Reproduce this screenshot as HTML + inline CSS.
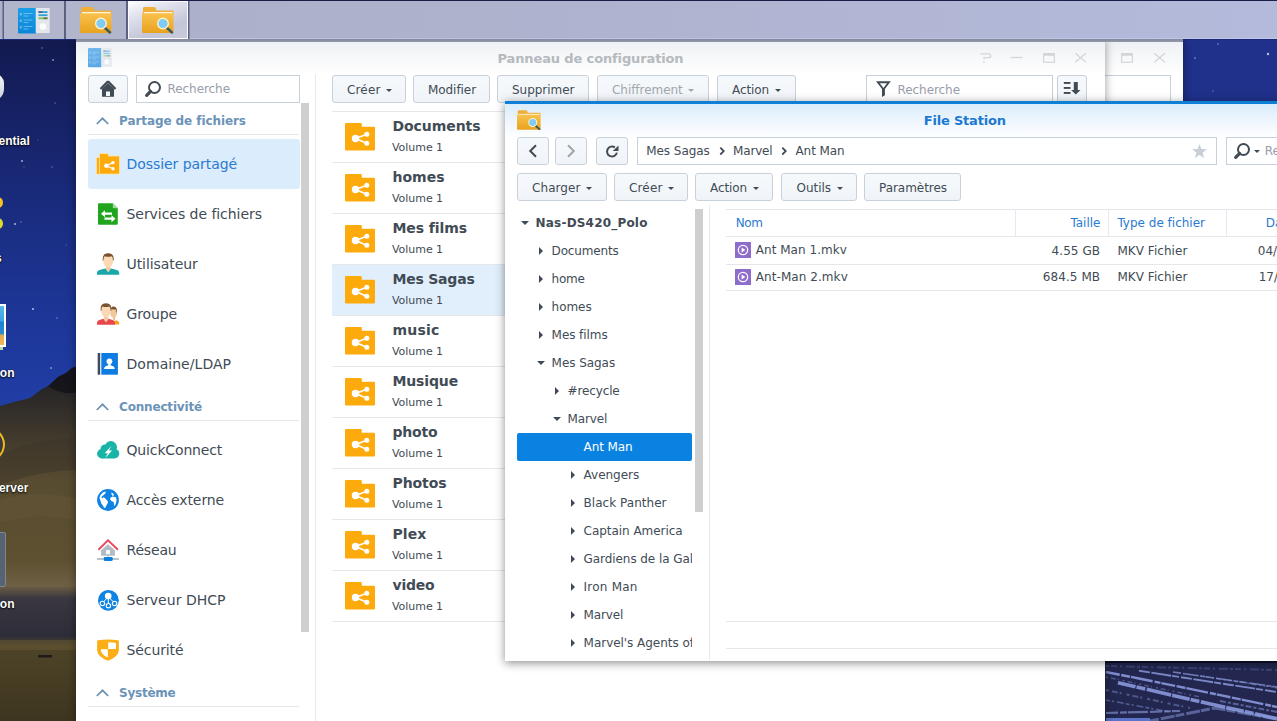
<!DOCTYPE html>
<html lang="fr">
<head>
<meta charset="utf-8">
<title>Synology DiskStation</title>
<style>
*{box-sizing:border-box;margin:0;padding:0}
html,body{width:1277px;height:721px;overflow:hidden}
body{position:relative;font-family:"DejaVu Sans","Liberation Sans",sans-serif;font-size:13px;color:#414b55;background:#1b2a78}
.abs{position:absolute}
svg{display:block}
#wall{position:absolute;left:0;top:0;width:1277px;height:721px;background:#1b2a78}
#tb{position:absolute;left:0;top:0;width:1277px;height:39px;background:linear-gradient(90deg,#acb0ca 0,#adb2cd 40%,#b4badb 100%);box-shadow:inset 0 -1px 0 rgba(200,208,245,.55);border-top:1px solid #1a1d48;z-index:5}
#band{position:absolute;left:76px;top:39px;width:1107px;height:3px;background:linear-gradient(180deg,#84889c,#9498aa);z-index:5}
.tbb{position:absolute;top:0;height:38px;width:60px;background:#b2b6cc;box-shadow:-1.500px 0 0 #5d6180,1.500px 0 0 #5d6180}
.tbb.on{background:linear-gradient(160deg,#fff 0,#e4e5f0 25%,#c3c5d9 70%,#c9cbdc 100%);border:1px solid #fafaff;box-shadow:-1.500px 0 0 #5d6180,1.500px 0 0 #5d6180}
.win{position:absolute;background:#fff}
#cp{width:1029px;height:700px;box-shadow:0 0 9px rgba(0,0,0,.4)}
#fs2{width:283px;height:500px;box-shadow:0 0 9px rgba(0,0,0,.4)}
#fs{width:800px;height:560px;border-top:3px solid #0d7fd6;box-shadow:0 2px 9px rgba(0,0,0,.45)}
.hdr{position:absolute;left:0;top:0;right:0;height:34px;background:linear-gradient(180deg,#edf0f3 0,#fff 100%)}
.btn{position:absolute;height:28px;border:1px solid #c8d1d9;border-radius:3px;background:linear-gradient(180deg,#f6f9fc,#f0f4f8);font-size:13px;color:#414b55;white-space:nowrap}
.btn.dis{color:#a0a6ac}
.car{position:absolute;width:0;height:0;border-left:3px solid transparent;border-right:3px solid transparent;border-top:3px solid #414b55}
.dis .car{border-top-color:#a0a6ac}
.inp{position:absolute;height:28px;border:1px solid #c8d1d9;background:#fff}
.t{position:absolute;white-space:nowrap;line-height:1;display:inline-block;transform-origin:0 0}
.hl{position:absolute;height:1px;background:#e4e8ec}
</style>
</head>
<body>
<div id="wall"></div>
<svg class="abs" style="left:0;top:0" width="1277" height="721" viewBox="0 0 1277 721">
<defs>
<linearGradient id="sky" x1="0" y1="0" x2="0" y2="1"><stop offset="0" stop-color="#131a50"/><stop offset=".25" stop-color="#17246a"/><stop offset=".5" stop-color="#1a2e84"/><stop offset=".75" stop-color="#1d3799"/><stop offset="1" stop-color="#213fa8"/></linearGradient>
<linearGradient id="hill" x1="0" y1="0" x2="0" y2="1"><stop offset="0" stop-color="#1c1b24"/><stop offset=".08" stop-color="#2a2728"/><stop offset=".2" stop-color="#40392c"/><stop offset=".32" stop-color="#574b31"/><stop offset=".55" stop-color="#5e5131"/><stop offset=".62" stop-color="#6e6044"/><stop offset=".655" stop-color="#3a3740"/><stop offset=".76" stop-color="#2d2d39"/><stop offset=".79" stop-color="#4e4428"/><stop offset="1" stop-color="#3d351f"/></linearGradient>
</defs>
<rect x="0" y="40" width="80" height="380" fill="url(#sky)"/>
<path d="M0 406L14 402L30 398L42 389L50 385L58 377L66 373L72 368L80 365V721H0z" fill="url(#hill)"/>
<path d="M0 455Q30 440 80 438V470Q40 470 0 485z" fill="#3c3428" opacity=".5"/><path d="M48 386L58 377L66 373L72 368L80 365V392Q62 396 48 386z" fill="#121218" opacity=".8"/>
<path d="M0 500Q40 488 80 500V520Q40 512 0 522z" fill="#6a5c3c" opacity=".35"/>
<path d="M0 640H80V650H0z" fill="#6a5a36" opacity=".5"/>
<rect x="38" y="655" width="14" height="2.500" rx="1" fill="#1d1b18"/>
<g fill="#aab4e8"><circle cx="42" cy="48" r=".8" opacity=".6"/><circle cx="53" cy="60" r=".9" opacity=".8"/><circle cx="22" cy="161" r=".9"/><circle cx="55" cy="103" r=".7" opacity=".6"/><circle cx="52" cy="167" r=".7" opacity=".6"/><circle cx="38" cy="140" r=".6" opacity=".5"/><circle cx="15" cy="224" r="1"/><circle cx="33" cy="309" r="1.100"/><circle cx="57" cy="318" r=".8" opacity=".7"/><circle cx="51" cy="368" r=".9" opacity=".8"/><circle cx="21" cy="222" r=".7" opacity=".6"/><circle cx="66" cy="245" r=".6" opacity=".6"/><circle cx="24" cy="167" r=".6" opacity=".6"/></g>
<rect x="1183" y="40" width="94" height="62" fill="#20318b"/>
<g fill="#b4bdf0"><circle cx="1218" cy="44" r=".8" opacity=".7"/><circle cx="1268" cy="54" r="1.200"/><circle cx="1195" cy="58" r="1" opacity=".5"/><circle cx="1213" cy="91" r=".8" opacity=".5"/></g>
<rect x="1105" y="660" width="172" height="61" fill="#23274f"/>
<rect x="1105" y="660" width="172" height="3" fill="#10122e"/>
<g stroke="#8fa0e4" fill="none" stroke-linecap="butt">
<path d="M1106 672L1139 678.500L1210 693L1277 707" stroke-width="2.400" opacity=".85" stroke-dasharray="14 1.500 9 1 22 2 6 1"/>
<path d="M1139 670.700L1231 685L1277 692" stroke-width="1.900" opacity=".8" stroke-dasharray="11 1.500 20 1 7 2"/>
<path d="M1173 672L1277 687" stroke-width="1.600" opacity=".7" stroke-dasharray="8 2 16 1.500 5 1"/>
<path d="M1118 682.700L1206 703L1277 718.700" stroke-width="3.600" opacity=".85" stroke-dasharray="18 1 9 1.500 25 1"/>
<path d="M1106 666L1277 670" stroke-width="2" opacity=".35" stroke="#6a78c0" stroke-dasharray="3 2 6 3 2 4 9 2"/>
<path d="M1106 677L1200 697" stroke-width="1.500" opacity=".4" stroke-dasharray="2 3 5 2 1 4"/>
<path d="M1106 690L1190 708" stroke-width="2" opacity=".4" stroke-dasharray="3 3 6 2 2 5"/>
<path d="M1106 700L1170 712" stroke-width="1.600" opacity=".45" stroke-dasharray="4 2 2 3 7 2"/>
<path d="M1200 676L1277 688" stroke-width="1.400" opacity=".4" stroke-dasharray="2 2 5 3"/>
<path d="M1220 701L1277 712" stroke-width="2" opacity=".5" stroke-dasharray="6 2 3 2"/>
<path d="M1106 713L1180 711" stroke-width="2.200" opacity=".6" stroke-dasharray="12 2 7 1 20 2"/>
<path d="M1150 721L1215 708L1277 719" stroke-width="3" opacity=".5" stroke-dasharray="9 2 14 1"/>
<path d="M1106 719.500H1150" stroke-width="3" stroke="#6079d2" opacity=".95"/></g>
</svg>
<div class="abs" style="left:0;top:39px;width:76px;height:682px;overflow:hidden">
<div class="abs" style="left:-14px;top:35px;width:18px;height:27px;border-radius:0 9px 12px 0;background:linear-gradient(180deg,#f4f6f8,#c9cfd8)"></div>
<div class="abs" style="left:-8px;top:158px;width:10.500px;height:11px;border-radius:50%;background:#f4c222"></div>
<div class="abs" style="left:-8px;top:178.5px;width:10.500px;height:11px;border-radius:50%;background:#dcd832"></div>
<div class="abs" style="left:-20px;top:308px;width:23px;height:3px;background:#b8d8a0"></div>
<div class="abs" style="left:-20px;top:265px;width:26px;height:43px;background:linear-gradient(180deg,#58b8ec 0,#3aa4e4 38%,#1a80d2 42%,#2a8ad4 70%,#e8aa4c 76%,#eeb660 100%);border:2px solid #fff;border-left:0"></div>
<div class="abs" style="left:-41px;top:386px;width:46px;height:39px;border-radius:50%;border:2.500px solid #f2b91a;background:#3a3a3c"></div>
<div class="abs" style="left:-20px;top:493px;width:26px;height:55px;border-radius:2px;background:#586270;border:1px solid #7d8794"></div>
<div class="t" style="right:46.2px;top:95.85px;font-family:'Liberation Sans',sans-serif;font-size:12px;font-weight:bold;color:#fff;text-shadow:0 1px 2px rgba(0,0,0,.9),0 0 1px rgba(0,0,0,.8);">Essential</div>
<div class="t" style="right:74.4px;top:212.85px;font-family:'Liberation Sans',sans-serif;font-size:12px;font-weight:bold;color:#fff;text-shadow:0 1px 2px rgba(0,0,0,.9),0 0 1px rgba(0,0,0,.8);">Packages</div>
<div class="t" style="right:61.5px;top:327.85px;font-family:'Liberation Sans',sans-serif;font-size:12px;font-weight:bold;color:#fff;text-shadow:0 1px 2px rgba(0,0,0,.9),0 0 1px rgba(0,0,0,.8);">Photo Station</div>
<div class="t" style="right:47.7px;top:443.35px;font-family:'Liberation Sans',sans-serif;font-size:12px;font-weight:bold;color:#fff;text-shadow:0 1px 2px rgba(0,0,0,.9),0 0 1px rgba(0,0,0,.8);">Media Server</div>
<div class="t" style="right:61.5px;top:559.45px;font-family:'Liberation Sans',sans-serif;font-size:12px;font-weight:bold;color:#fff;text-shadow:0 1px 2px rgba(0,0,0,.9),0 0 1px rgba(0,0,0,.8);">File Station</div>
</div>
<div id="tb"><div class="tbb" style="left:4px"><svg class="abs" style="left:14px;top:7px" width="32" height="26" viewBox="0 0 32 26"><defs><linearGradient id="cpg0" x1="0" y1="0" x2="0" y2="1"><stop offset="0" stop-color="#1a9ee8"/><stop offset="1" stop-color="#0b86d8"/></linearGradient></defs>
<rect x="0" y="0" width="18" height="25.500" rx="0.8" fill="url(#cpg0)"/>
<rect x="17.700" y="0" width="14" height="25" rx="0.8" fill="#e3e6ea"/>
<rect x="20.500" y="3.200" width="9" height="1.800" fill="#2f9fd8"/><rect x="20.500" y="6.300" width="9" height="1.800" fill="#2f9fd8"/><rect x="20.500" y="9.400" width="9" height="1.800" fill="#7cbf4a"/>
<rect x="20.500" y="3.200" width="4" height="1.800" fill="#4a5560" opacity=".7"/><rect x="25.500" y="9.400" width="4" height="1.800" fill="#4a5560" opacity=".7"/>
<circle cx="25" cy="18.500" r="3.300" fill="#fbfcfd"/>
<g fill="#fff" opacity=".35"><rect x="5.500" y="5" width="9" height="1"/><rect x="5.500" y="7.500" width="5" height="1"/><rect x="5.500" y="11.500" width="9" height="1"/><rect x="5.500" y="14" width="5" height="1"/><rect x="5.500" y="18" width="9" height="1"/><rect x="5.500" y="20.500" width="5" height="1"/><rect x="1.800" y="5" width="2" height="2.500"/><rect x="1.800" y="11.500" width="2" height="2.500"/><rect x="1.800" y="18" width="2" height="2.500"/></g></svg></div><div class="tbb" style="left:66px"><svg class="abs" style="left:14px;top:5.500px" width="32" height="27" viewBox="0 0 32 27"><defs><linearGradient id="fga" x1="0" y1="0" x2="0" y2="1"><stop offset="0" stop-color="#f8c24e"/><stop offset="1" stop-color="#e9a21f"/></linearGradient></defs>
<path d="M1 3.500V1.200Q1 0 2.200 0H12.300Q13.300 0 13.600 1L14.300 3.500H30.500Q31.500 3.500 31.500 4.500V8H1z" fill="#eeb03a"/>
<rect x="2" y="5" width="28.500" height="4" fill="#fdf3d6"/>
<path d="M0 7.200Q0 6.200 1 6.200H30.500Q31.500 6.200 31.500 7.200V25Q31.500 26 30.500 26H1Q0 26 0 25z" fill="url(#fga)"/>
<path d="M24.500 20.500L30 25.500" stroke="#3a5a5c" stroke-width="2.400" stroke-linecap="round"/>
<circle cx="21" cy="16.500" r="5.300" fill="#7dcbf6" stroke="#fff3c4" stroke-width="1.400"/></svg></div><div class="tbb on" style="left:128px"><svg class="abs" style="left:13px;top:4.500px" width="32" height="27" viewBox="0 0 32 27"><defs><linearGradient id="fgb" x1="0" y1="0" x2="0" y2="1"><stop offset="0" stop-color="#f8c24e"/><stop offset="1" stop-color="#e9a21f"/></linearGradient></defs>
<path d="M1 3.500V1.200Q1 0 2.200 0H12.300Q13.300 0 13.600 1L14.300 3.500H30.500Q31.500 3.500 31.500 4.500V8H1z" fill="#eeb03a"/>
<rect x="2" y="5" width="28.500" height="4" fill="#fdf3d6"/>
<path d="M0 7.200Q0 6.200 1 6.200H30.500Q31.500 6.200 31.500 7.200V25Q31.500 26 30.500 26H1Q0 26 0 25z" fill="url(#fgb)"/>
<path d="M24.500 20.500L30 25.500" stroke="#3a5a5c" stroke-width="2.400" stroke-linecap="round"/>
<circle cx="21" cy="16.500" r="5.300" fill="#7dcbf6" stroke="#fff3c4" stroke-width="1.400"/></svg></div></div>
<div id="band"></div>
<div class="win" id="fs2" style="left:900px;top:40px">
<div class="hdr"></div>
<div class="abs" style="left:219.70000000000005px;top:8.200000000000003px"><svg width="50" height="16" viewBox="0 0 50 16" ><g fill="none" stroke="#d2d6da" stroke-width="1.200">
<rect x="1.600" y="5.600" width="10.800" height="8.600"/><path d="M1.600 6.800h10.800" stroke-width="2"/>
<path d="M34.300 5.300l10.600 9M44.900 5.300l-10.600 9"/></g></svg></div>
<div class="inp" style="left:100px;top:35px;width:171px;height:28px;"></div>
</div>
<div class="win" id="cp" style="left:76px;top:40px">
<div class="hdr"></div>
<div class="abs" style="left:12px;top:7.5px"><svg width="24" height="20" viewBox="0 0 32 26.500" style="display:block"><defs><linearGradient id="cpgs" x1="0" y1="0" x2="0" y2="1"><stop offset="0" stop-color="#6eb6ec"/><stop offset="1" stop-color="#59a9e6"/></linearGradient></defs>
<rect x="0" y="0" width="18" height="25.500" rx="0.8" fill="url(#cpgs)"/>
<rect x="17.700" y="0" width="14" height="25" rx="0.8" fill="#e6eaee"/>
<rect x="20.500" y="3.200" width="9" height="1.800" fill="#8ecbee"/><rect x="20.500" y="6.300" width="9" height="1.800" fill="#8ecbee"/><rect x="20.500" y="9.400" width="9" height="1.800" fill="#a9d69a"/>
<rect x="20.500" y="3.200" width="4" height="1.800" fill="#9aa5ae" opacity=".7"/><rect x="25.500" y="9.400" width="4" height="1.800" fill="#9aa5ae" opacity=".7"/>
<circle cx="25" cy="18.500" r="3.300" fill="#fbfcfd"/>
<g fill="#fff" opacity=".35"><rect x="5.500" y="5" width="9" height="1"/><rect x="5.500" y="7.500" width="5" height="1"/><rect x="5.500" y="11.500" width="9" height="1"/><rect x="5.500" y="14" width="5" height="1"/><rect x="5.500" y="18" width="9" height="1"/><rect x="5.500" y="20.500" width="5" height="1"/><rect x="1.800" y="5" width="2" height="2.500"/><rect x="1.800" y="11.500" width="2" height="2.500"/><rect x="1.800" y="18" width="2" height="2.500"/></g></svg></div>
<div class="t" style="top:12.00px;font-size:13px;color:#b5babf;font-weight:bold;letter-spacing:-0.130px;left:421.5px;">Panneau de configuration</div>
<div class="abs" style="left:900px;top:8.200000000000003px"><svg width="112" height="16" viewBox="0 0 112 16" ><g fill="none" stroke="#d2d6da" stroke-width="1.200">
<path d="M4.500 5.800h8.600q1.700 0 1.700 1.900q0 2-1.900 2h-4.900v1.700"/><path d="M8 13.200v1.500"/>
<path d="M34.800 9.500h12"/>
<rect x="67.600" y="5.600" width="10.800" height="8.600"/><path d="M67.600 6.800h10.800" stroke-width="2"/>
<path d="M99.300 5.300l10.600 9M109.900 5.300l-10.600 9"/></g></svg></div>
<div class="btn" style="left:12px;top:35px;width:40px;height:28px;"></div>
<div class="abs" style="left:22px;top:40px"><svg width="20" height="18" viewBox="0 0 20 18" ><path d="M10 1.300L2.500 8.900M10 1.300l7.500 7.600" stroke="#414b55" stroke-width="2.200" stroke-linecap="butt" fill="none"/><path d="M4 8.800L10 2.900l6 5.900V16.800H4z" fill="#414b55"/><rect x="8" y="11.500" width="4" height="4.500" fill="#f4f7fa"/></svg></div>
<div class="inp" style="left:60px;top:35px;width:164px;height:28px;"></div>
<div class="abs" style="left:68px;top:40px"><svg width="18" height="18" viewBox="0 0 18 18" ><circle cx="10.500" cy="7.500" r="5.500" fill="none" stroke="#414b55" stroke-width="2"/><path d="M6.600 11.400L2.700 15.300" stroke="#414b55" stroke-width="3.200" stroke-linecap="round"/></svg></div>
<div class="t" style="top:43.05px;font-size:12px;color:#979dab;letter-spacing:-0.059px;left:91.5px;">Recherche</div>
<div class="abs" style="left:225px;top:63px;width:8px;height:529px;background:#cfcfcf"></div>
<div class="abs" style="left:239px;top:34px;width:1px;height:660px;background:#e6e9ed"></div>
<div class="abs" style="left:19.5px;top:76.7px"><svg width="13" height="8" viewBox="0 0 13 8" ><path d="M0.800 7L6.500 1.300 12.200 7" fill="none" stroke="#6b90b0" stroke-width="1.700"/></svg></div><div class="t" style="top:74.85px;font-size:12px;color:#6b93b8;font-weight:bold;letter-spacing:-0.079px;left:43px;">Partage de fichiers</div><div class="hl" style="left:12px;top:94px;width:211px"></div>
<div class="abs" style="left:19.5px;top:362.7px"><svg width="13" height="8" viewBox="0 0 13 8" ><path d="M0.800 7L6.500 1.300 12.200 7" fill="none" stroke="#6b90b0" stroke-width="1.700"/></svg></div><div class="t" style="top:360.85px;font-size:12px;color:#6b93b8;font-weight:bold;letter-spacing:-0.172px;left:43px;">Connectivité</div><div class="hl" style="left:12px;top:380px;width:211px"></div>
<div class="abs" style="left:19.5px;top:648.7px"><svg width="13" height="8" viewBox="0 0 13 8" ><path d="M0.800 7L6.500 1.300 12.200 7" fill="none" stroke="#6b90b0" stroke-width="1.700"/></svg></div><div class="t" style="top:646.85px;font-size:12px;color:#6b93b8;font-weight:bold;letter-spacing:-0.232px;left:43px;">Système</div><div class="hl" style="left:12px;top:666px;width:211px"></div>
<div class="abs" style="left:12px;top:99px;width:212px;height:49.5px;background:#dbecfc;border-radius:3px"></div>
<div class="abs" style="left:20px;top:112px;width:24px;height:24px"><svg width="24" height="24" viewBox="0 0 24 24" ><rect x="0.400" y="5.400" width="4" height="16.800" rx="0.800" fill="#fdaa0d" stroke="#fde9b0" stroke-width="0.800"/>
<path d="M3.400 2.500Q3.400 1.600 4.300 1.600H11.600Q12.500 1.600 12.500 2.500V4H22.700Q23.600 4 23.600 4.900V21.200Q23.600 22.100 22.700 22.100H4.300Q3.400 22.100 3.400 21.200z" fill="#fdaa0d" stroke="#fde9b0" stroke-width="0.800"/>
<g stroke="#fff" stroke-width="1.200"><path d="M10.400 13.700L17 10.600M10.400 13.700L17 16.800"/></g>
<circle cx="10.400" cy="13.700" r="2.300" fill="#fff"/><circle cx="17" cy="10.600" r="1.700" fill="#fff"/><circle cx="17" cy="16.800" r="1.700" fill="#fff"/></svg></div>
<div class="t" style="top:117.16px;font-size:14px;color:#2a7ad2;letter-spacing:-0.056px;left:50.5px;">Dossier partagé</div>
<div class="abs" style="left:20px;top:162px;width:24px;height:24px"><svg width="24" height="24" viewBox="0 0 24 24" ><path d="M2 2.200Q2 1.200 3 1.200H16.800L21.800 6.200V21.700Q21.800 22.700 20.800 22.700H3Q2 22.700 2 21.700z" fill="#22a51e"/>
<path d="M16.800 1.200L21.800 6.200H17.600Q16.800 6.200 16.800 5.400z" fill="#9fdc9b"/>
<g fill="#fff"><path d="M5 11.700L9 8.200V10.600H16V12.800H9V15.200z"/><path d="M19.500 16.700L15.500 13.200V15.600H8.500V17.800H15.500V20.200z"/></g></svg></div>
<div class="t" style="top:167.16px;font-size:14px;color:#414b55;letter-spacing:-0.045px;left:50.5px;">Services de fichiers</div>
<div class="abs" style="left:20px;top:212px;width:24px;height:24px"><svg width="24" height="24" viewBox="0 0 24 24" ><path d="M1 22.800V20.800Q1 18.600 3.500 17.900L9.200 16.400H15.200L20.700 17.900Q23.200 18.600 23.200 20.800V22.800z" fill="#19a7a8"/>
<path d="M9.300 16.300L12.200 20.200L15.100 16.300z" fill="#fbe3c6"/>
<path d="M10 13.500h4.400v3.600L12.200 19.600 10 17.100z" fill="#f3c9a0"/>
<ellipse cx="12.200" cy="8.800" rx="4.900" ry="6.500" fill="#fbd9b5"/>
<path d="M6.700 8.500Q6 1.200 12.200 1.200Q18.400 1.200 17.700 8.500L16.900 8.500Q17 5 15.500 4.300Q12 5.400 8.800 4.300Q7.400 5 7.500 8.500z" fill="#7a522f"/></svg></div>
<div class="t" style="top:217.16px;font-size:14px;color:#414b55;letter-spacing:-0.065px;left:50.5px;">Utilisateur</div>
<div class="abs" style="left:20px;top:262px;width:24px;height:24px"><svg width="24" height="24" viewBox="0 0 24 24" ><path d="M18 22.600V19.300L20.300 18.300Q23.200 19 23.200 21V22.600z" fill="#f5a623"/>
<path d="M16 12h3.200v5.500L17.500 19z" fill="#eac08f"/>
<ellipse cx="17.600" cy="10.800" rx="3.400" ry="5" fill="#f0c89c"/>
<path d="M14.300 9Q14.300 4.400 17.800 4.400Q21.300 4.400 21 10.500L20.300 10.500Q20.400 7.800 19.400 7.200Q17 7.800 15 7z" fill="#7a522f"/>
<path d="M1 22.700V20.900Q1 18.800 3.300 18.100L7.500 16.800H12.500L16.600 18.100Q19 18.800 19 20.900V22.700z" fill="#e8474c"/>
<path d="M7.300 16.700L10 20.300L12.700 16.700z" fill="#fbe3c6"/>
<path d="M7.900 13.800h4.200v3.500L10 19.700 7.900 17.300z" fill="#f3c9a0"/>
<ellipse cx="10" cy="9" rx="4.800" ry="6.400" fill="#fbd9b5"/>
<path d="M4.600 8.700Q3.900 1.300 10 1.300Q16.100 1.300 15.400 8.700L14.600 8.700Q14.700 5.200 13.200 4.500Q9.800 5.600 6.600 4.500Q5.300 5.200 5.400 8.700z" fill="#7a522f"/></svg></div>
<div class="t" style="top:267.16px;font-size:14px;color:#414b55;letter-spacing:-0.108px;left:50.5px;">Groupe</div>
<div class="abs" style="left:20px;top:312px;width:24px;height:24px"><svg width="24" height="24" viewBox="0 0 24 24" ><rect x="1.700" y="1" width="2.500" height="21.700" fill="#3e4a5e"/>
<rect x="5.300" y="1" width="16.600" height="21.700" fill="#0e7ce0"/>
<circle cx="13.400" cy="9.300" r="2.900" fill="#fff"/>
<path d="M12.200 11h2.400v2.200Q17.800 14 18.300 15.200Q18.700 16 18.700 17.100H8.100Q8.100 16 8.500 15.200Q9 14 12.200 13.200z" fill="#fff"/></svg></div>
<div class="t" style="top:317.16px;font-size:14px;color:#414b55;letter-spacing:0.049px;left:50.5px;">Domaine/LDAP</div>
<div class="abs" style="left:20px;top:398px;width:24px;height:24px"><svg width="24" height="24" viewBox="0 0 24 24" ><g fill="#19b3a7"><circle cx="5.800" cy="15.800" r="4.700"/><circle cx="8.800" cy="10.800" r="4.200"/><circle cx="14.800" cy="9.300" r="6.200"/><circle cx="18.600" cy="15.600" r="4.700"/><rect x="5.800" y="12" width="13" height="8.500"/></g>
<path d="M15.200 7.900L8.700 15.300H11.800L9.300 19.900L16.100 12.600H12.900z" fill="#fff"/></svg></div>
<div class="t" style="top:403.16px;font-size:14px;color:#414b55;letter-spacing:-0.149px;left:50.5px;">QuickConnect</div>
<div class="abs" style="left:20px;top:448px;width:24px;height:24px"><svg width="24" height="24" viewBox="0 0 24 24" ><circle cx="12" cy="12" r="10.900" fill="#0f83e3"/>
<path d="M7.200 4.300L9.800 3.500L9.400 5.600L7.300 7.200L5.300 9L6.300 10.200L7.800 9.200L9.600 10.800L11.900 13.600L11.900 14.800L10.500 17.200L9.300 19.800L8.200 20L6.800 17.500L5.200 15.200L4.400 12.500L3.500 10L4.400 7z" fill="#fff"/>
<path d="M15.200 4.600L17.200 5.500L18 7.600L16.400 7.800L15.600 6.200z" fill="#fff"/>
<path d="M14.300 9.800L16.800 8.600L20 9.200L20.600 11.500L20.200 14.200L19 17.500L18 17.800L17.800 14L15.600 13.300L14.200 11.500z" fill="#fff"/></svg></div>
<div class="t" style="top:453.16px;font-size:14px;color:#414b55;letter-spacing:-0.096px;left:50.5px;">Accès externe</div>
<div class="abs" style="left:20px;top:498px;width:24px;height:24px"><svg width="24" height="24" viewBox="0 0 24 24" ><path d="M12 6.200L18.900 12.300V17.800H5.100V12.300z" fill="#b3bbc6"/>
<rect x="10" y="12.100" width="4" height="4" fill="#fff"/>
<path d="M2.900 11.200L12 2.300L21.400 11.200" fill="none" stroke="#e9495a" stroke-width="1.900" stroke-linecap="round" stroke-linejoin="miter"/>
<rect x="1.100" y="20.100" width="21.800" height="1.800" fill="#b3bbc6"/>
<rect x="11.500" y="17.800" width="1" height="1.400" fill="#7fbdf0"/>
<rect x="7.800" y="19" width="8.900" height="3.900" rx="1.200" fill="#0f7fdc"/></svg></div>
<div class="t" style="top:503.16px;font-size:14px;color:#414b55;letter-spacing:-0.180px;left:50.5px;">Réseau</div>
<div class="abs" style="left:20px;top:548px;width:24px;height:24px"><svg width="24" height="24" viewBox="0 0 24 24" ><circle cx="12.400" cy="12.300" r="10.400" fill="#0f83e3"/>
<g stroke="#fff" stroke-width="1" fill="none"><path d="M12.300 8.200V15.400M11 10L7.600 13.800M13.600 10L17.200 13.800"/>
<circle cx="6.400" cy="15.400" r="2.200" stroke-width="1.100"/><circle cx="12.400" cy="17.700" r="2.200" stroke-width="1.100"/><circle cx="18.600" cy="15.400" r="2.200" stroke-width="1.100"/></g>
<circle cx="12.200" cy="8.100" r="3.300" fill="#fff"/></svg></div>
<div class="t" style="top:553.16px;font-size:14px;color:#414b55;letter-spacing:0.020px;left:50.5px;">Serveur DHCP</div>
<div class="abs" style="left:20px;top:598px;width:24px;height:24px"><svg width="24" height="24" viewBox="0 0 24 24" ><path d="M1.100 3.200Q1.100 2.400 1.900 2.300Q12 0.500 22 2.300Q22.900 2.400 22.900 3.200V12Q22.900 18.500 12 22.800Q1.100 18.500 1.100 12z" fill="#fcae17"/>
<path d="M12.200 4.200Q16.500 4.300 20 5V10.900H12.200z" fill="#fff"/>
<path d="M4.700 11.300H11.800V19.600Q5 16.800 4.700 11.300z" fill="#fff"/></svg></div>
<div class="t" style="top:603.16px;font-size:14px;color:#414b55;letter-spacing:-0.104px;left:50.5px;">Sécurité</div>
<div class="btn" style="left:256px;top:35px;width:74px"></div><div class="t" style="top:44.25px;font-size:12px;color:#414b55;letter-spacing:0.150px;left:271px;">Créer</div><div class="car" style="left:310.0px;top:49.2px;border-top-color:#414b55"></div>
<div class="btn" style="left:337px;top:35px;width:77px"></div><div class="t" style="top:44.25px;font-size:12px;color:#414b55;letter-spacing:-0.066px;left:352px;">Modifier</div>
<div class="btn" style="left:421px;top:35px;width:92px"></div><div class="t" style="top:44.25px;font-size:12px;color:#414b55;letter-spacing:-0.026px;left:436px;">Supprimer</div>
<div class="btn dis" style="left:521px;top:35px;width:112px"></div><div class="t" style="top:44.25px;font-size:12px;color:#a0a6ac;letter-spacing:-0.048px;left:536px;">Chiffrement</div><div class="car" style="left:612.0px;top:49.2px;border-top-color:#a0a6ac"></div>
<div class="btn" style="left:641px;top:35px;width:78.5px"></div><div class="t" style="top:44.25px;font-size:12px;color:#414b55;letter-spacing:-0.099px;left:656px;">Action</div><div class="car" style="left:698.5px;top:49.2px;border-top-color:#414b55"></div>
<div class="inp" style="left:790px;top:35px;width:187px;height:28px;"></div>
<div class="abs" style="left:799px;top:41px"><svg width="17" height="17" viewBox="0 0 17 17" ><path fill-rule="evenodd" d="M1 0.200H15.800L9.900 8V14.200L7 16V8zM4.800 2.200H12L8.400 6.900z" fill="#414b55"/></svg></div>
<div class="t" style="top:44.05px;font-size:12px;color:#979dab;letter-spacing:-0.059px;left:821.5px;">Recherche</div>
<div class="btn" style="left:981px;top:35px;width:29.5px;height:28px;"></div>
<div class="abs" style="left:987px;top:41px"><svg width="18" height="14" viewBox="0 0 18 14" ><g fill="#414b55"><rect x="0.800" y="1" width="6.700" height="1.900"/><rect x="0.800" y="6" width="6.700" height="1.900"/><rect x="0.800" y="11" width="6.700" height="1.900"/><path d="M10.800 1h4v8h2.700l-4.700 4.500L8.100 9h2.700z"/></g></svg></div>
<div class="hl" style="left:256px;top:71px;width:780px"></div>
<div class="abs" style="left:269px;top:83.2px"><svg width="30" height="28" viewBox="0 0 30 28" ><path d="M0 1Q0 0 1 0H15.800Q16.800 0 16.800 1V3.800H29Q30 3.800 30 4.800V26.500Q30 27.500 29 27.500H1Q0 27.500 0 26.500z" fill="#fdaa0d"/>
<g stroke="#fff" stroke-width="1.600" fill="none"><path d="M10.500 15.500L21.800 11.200M10.500 15.500L21.800 20.200"/></g>
<circle cx="10.500" cy="15.500" r="3.700" fill="#fff"/><circle cx="21.800" cy="11.200" r="2.500" fill="#fff"/><circle cx="21.800" cy="20.200" r="2.500" fill="#fff"/></svg></div>
<div class="t" style="top:78.96px;font-size:14px;color:#414b55;font-weight:bold;letter-spacing:-0.066px;left:316.5px;">Documents</div>
<div class="t" style="top:102.29px;font-size:11px;color:#414b55;letter-spacing:-0.053px;left:316px;">Volume 1</div>
<div class="hl" style="left:256px;top:122px;width:780px"></div>
<div class="abs" style="left:269px;top:134.2px"><svg width="30" height="28" viewBox="0 0 30 28" ><path d="M0 1Q0 0 1 0H15.800Q16.800 0 16.800 1V3.800H29Q30 3.800 30 4.800V26.500Q30 27.500 29 27.500H1Q0 27.500 0 26.500z" fill="#fdaa0d"/>
<g stroke="#fff" stroke-width="1.600" fill="none"><path d="M10.500 15.500L21.800 11.200M10.500 15.500L21.800 20.200"/></g>
<circle cx="10.500" cy="15.500" r="3.700" fill="#fff"/><circle cx="21.800" cy="11.200" r="2.500" fill="#fff"/><circle cx="21.800" cy="20.200" r="2.500" fill="#fff"/></svg></div>
<div class="t" style="top:129.96px;font-size:14px;color:#414b55;font-weight:bold;letter-spacing:-0.003px;left:316.5px;">homes</div>
<div class="t" style="top:153.29px;font-size:11px;color:#414b55;letter-spacing:-0.053px;left:316px;">Volume 1</div>
<div class="hl" style="left:256px;top:173px;width:780px"></div>
<div class="abs" style="left:269px;top:185.2px"><svg width="30" height="28" viewBox="0 0 30 28" ><path d="M0 1Q0 0 1 0H15.800Q16.800 0 16.800 1V3.800H29Q30 3.800 30 4.800V26.500Q30 27.500 29 27.500H1Q0 27.500 0 26.500z" fill="#fdaa0d"/>
<g stroke="#fff" stroke-width="1.600" fill="none"><path d="M10.500 15.500L21.800 11.200M10.500 15.500L21.800 20.200"/></g>
<circle cx="10.500" cy="15.500" r="3.700" fill="#fff"/><circle cx="21.800" cy="11.200" r="2.500" fill="#fff"/><circle cx="21.800" cy="20.200" r="2.500" fill="#fff"/></svg></div>
<div class="t" style="top:180.96px;font-size:14px;color:#414b55;font-weight:bold;letter-spacing:-0.082px;left:316.5px;">Mes films</div>
<div class="t" style="top:204.29px;font-size:11px;color:#414b55;letter-spacing:-0.053px;left:316px;">Volume 1</div>
<div class="abs" style="left:256px;top:225px;width:780px;height:50px;background:#e1effc"></div>
<div class="hl" style="left:256px;top:224px;width:780px"></div>
<div class="abs" style="left:269px;top:236.2px"><svg width="30" height="28" viewBox="0 0 30 28" ><path d="M0 1Q0 0 1 0H15.800Q16.800 0 16.800 1V3.800H29Q30 3.800 30 4.800V26.500Q30 27.500 29 27.500H1Q0 27.500 0 26.500z" fill="#fdaa0d"/>
<g stroke="#fff" stroke-width="1.600" fill="none"><path d="M10.500 15.500L21.800 11.200M10.500 15.500L21.800 20.200"/></g>
<circle cx="10.500" cy="15.500" r="3.700" fill="#fff"/><circle cx="21.800" cy="11.200" r="2.500" fill="#fff"/><circle cx="21.800" cy="20.200" r="2.500" fill="#fff"/></svg></div>
<div class="t" style="top:231.96px;font-size:14px;color:#414b55;font-weight:bold;letter-spacing:-0.219px;left:316.5px;">Mes Sagas</div>
<div class="t" style="top:255.29px;font-size:11px;color:#414b55;letter-spacing:-0.053px;left:316px;">Volume 1</div>
<div class="hl" style="left:256px;top:275px;width:780px"></div>
<div class="abs" style="left:269px;top:287.2px"><svg width="30" height="28" viewBox="0 0 30 28" ><path d="M0 1Q0 0 1 0H15.800Q16.800 0 16.800 1V3.800H29Q30 3.800 30 4.800V26.500Q30 27.500 29 27.500H1Q0 27.500 0 26.500z" fill="#fdaa0d"/>
<g stroke="#fff" stroke-width="1.600" fill="none"><path d="M10.500 15.500L21.800 11.200M10.500 15.500L21.800 20.200"/></g>
<circle cx="10.500" cy="15.500" r="3.700" fill="#fff"/><circle cx="21.800" cy="11.200" r="2.500" fill="#fff"/><circle cx="21.800" cy="20.200" r="2.500" fill="#fff"/></svg></div>
<div class="t" style="top:282.96px;font-size:14px;color:#414b55;font-weight:bold;letter-spacing:0.200px;left:316.5px;">music</div>
<div class="t" style="top:306.29px;font-size:11px;color:#414b55;letter-spacing:-0.053px;left:316px;">Volume 1</div>
<div class="hl" style="left:256px;top:326px;width:780px"></div>
<div class="abs" style="left:269px;top:338.2px"><svg width="30" height="28" viewBox="0 0 30 28" ><path d="M0 1Q0 0 1 0H15.800Q16.800 0 16.800 1V3.800H29Q30 3.800 30 4.800V26.500Q30 27.500 29 27.500H1Q0 27.500 0 26.500z" fill="#fdaa0d"/>
<g stroke="#fff" stroke-width="1.600" fill="none"><path d="M10.500 15.500L21.800 11.200M10.500 15.500L21.800 20.200"/></g>
<circle cx="10.500" cy="15.500" r="3.700" fill="#fff"/><circle cx="21.800" cy="11.200" r="2.500" fill="#fff"/><circle cx="21.800" cy="20.200" r="2.500" fill="#fff"/></svg></div>
<div class="t" style="top:333.96px;font-size:14px;color:#414b55;font-weight:bold;letter-spacing:-0.145px;left:316.5px;">Musique</div>
<div class="t" style="top:357.29px;font-size:11px;color:#414b55;letter-spacing:-0.053px;left:316px;">Volume 1</div>
<div class="hl" style="left:256px;top:377px;width:780px"></div>
<div class="abs" style="left:269px;top:389.2px"><svg width="30" height="28" viewBox="0 0 30 28" ><path d="M0 1Q0 0 1 0H15.800Q16.800 0 16.800 1V3.800H29Q30 3.800 30 4.800V26.500Q30 27.500 29 27.500H1Q0 27.500 0 26.500z" fill="#fdaa0d"/>
<g stroke="#fff" stroke-width="1.600" fill="none"><path d="M10.500 15.500L21.800 11.200M10.500 15.500L21.800 20.200"/></g>
<circle cx="10.500" cy="15.500" r="3.700" fill="#fff"/><circle cx="21.800" cy="11.200" r="2.500" fill="#fff"/><circle cx="21.800" cy="20.200" r="2.500" fill="#fff"/></svg></div>
<div class="t" style="top:384.96px;font-size:14px;color:#414b55;font-weight:bold;letter-spacing:-0.184px;left:316.5px;">photo</div>
<div class="t" style="top:408.29px;font-size:11px;color:#414b55;letter-spacing:-0.053px;left:316px;">Volume 1</div>
<div class="hl" style="left:256px;top:428px;width:780px"></div>
<div class="abs" style="left:269px;top:440.2px"><svg width="30" height="28" viewBox="0 0 30 28" ><path d="M0 1Q0 0 1 0H15.800Q16.800 0 16.800 1V3.800H29Q30 3.800 30 4.800V26.500Q30 27.500 29 27.500H1Q0 27.500 0 26.500z" fill="#fdaa0d"/>
<g stroke="#fff" stroke-width="1.600" fill="none"><path d="M10.500 15.500L21.800 11.200M10.500 15.500L21.800 20.200"/></g>
<circle cx="10.500" cy="15.500" r="3.700" fill="#fff"/><circle cx="21.800" cy="11.200" r="2.500" fill="#fff"/><circle cx="21.800" cy="20.200" r="2.500" fill="#fff"/></svg></div>
<div class="t" style="top:435.96px;font-size:14px;color:#414b55;font-weight:bold;letter-spacing:-0.083px;left:316.5px;">Photos</div>
<div class="t" style="top:459.29px;font-size:11px;color:#414b55;letter-spacing:-0.053px;left:316px;">Volume 1</div>
<div class="hl" style="left:256px;top:479px;width:780px"></div>
<div class="abs" style="left:269px;top:491.20000000000005px"><svg width="30" height="28" viewBox="0 0 30 28" ><path d="M0 1Q0 0 1 0H15.800Q16.800 0 16.800 1V3.800H29Q30 3.800 30 4.800V26.500Q30 27.500 29 27.500H1Q0 27.500 0 26.500z" fill="#fdaa0d"/>
<g stroke="#fff" stroke-width="1.600" fill="none"><path d="M10.500 15.500L21.800 11.200M10.500 15.500L21.800 20.200"/></g>
<circle cx="10.500" cy="15.500" r="3.700" fill="#fff"/><circle cx="21.800" cy="11.200" r="2.500" fill="#fff"/><circle cx="21.800" cy="20.200" r="2.500" fill="#fff"/></svg></div>
<div class="t" style="top:486.96px;font-size:14px;color:#414b55;font-weight:bold;letter-spacing:0.102px;left:316.5px;">Plex</div>
<div class="t" style="top:510.29px;font-size:11px;color:#414b55;letter-spacing:-0.053px;left:316px;">Volume 1</div>
<div class="hl" style="left:256px;top:530px;width:780px"></div>
<div class="abs" style="left:269px;top:542.2px"><svg width="30" height="28" viewBox="0 0 30 28" ><path d="M0 1Q0 0 1 0H15.800Q16.800 0 16.800 1V3.800H29Q30 3.800 30 4.800V26.500Q30 27.500 29 27.500H1Q0 27.500 0 26.500z" fill="#fdaa0d"/>
<g stroke="#fff" stroke-width="1.600" fill="none"><path d="M10.500 15.500L21.800 11.200M10.500 15.500L21.800 20.200"/></g>
<circle cx="10.500" cy="15.500" r="3.700" fill="#fff"/><circle cx="21.800" cy="11.200" r="2.500" fill="#fff"/><circle cx="21.800" cy="20.200" r="2.500" fill="#fff"/></svg></div>
<div class="t" style="top:537.96px;font-size:14px;color:#414b55;font-weight:bold;letter-spacing:-0.212px;left:316.5px;">video</div>
<div class="t" style="top:561.29px;font-size:11px;color:#414b55;letter-spacing:-0.053px;left:316px;">Volume 1</div>
<div class="hl" style="left:256px;top:581px;width:780px"></div>
</div>
<div class="win" id="fs" style="left:505px;top:101px">
<div class="abs" style="left:0;top:0;right:0;height:34px;background:linear-gradient(180deg,#d9ecfb 0,#eef6fd 50%,#fff 100%)"></div>
<div class="abs" style="left:12.200000000000045px;top:5.599999999999994px"><svg width="24" height="20.500" viewBox="0 0 32 27" style="display:block"><defs><linearGradient id="fgc" x1="0" y1="0" x2="0" y2="1"><stop offset="0" stop-color="#f8c24e"/><stop offset="1" stop-color="#e9a21f"/></linearGradient></defs>
<path d="M1 3.500V1.200Q1 0 2.200 0H12.300Q13.300 0 13.600 1L14.300 3.500H30.500Q31.500 3.500 31.500 4.500V8H1z" fill="#eeb03a"/>
<rect x="2" y="5" width="28.500" height="4" fill="#fdf3d6"/>
<path d="M0 7.200Q0 6.200 1 6.200H30.500Q31.500 6.200 31.500 7.200V25Q31.500 26 30.500 26H1Q0 26 0 25z" fill="url(#fgc)"/>
<path d="M24.500 20.500L30 25.500" stroke="#3a5a5c" stroke-width="2.400" stroke-linecap="round"/>
<circle cx="21" cy="16.500" r="5.300" fill="#7dcbf6" stroke="#fff3c4" stroke-width="1.400"/></svg></div>
<div class="t" style="top:10.00px;font-size:13px;color:#1b79d2;font-weight:bold;letter-spacing:-0.195px;left:418.75px;">File Station</div>
<div class="btn" style="left:12px;top:33px;width:31.5px;height:28px;"></div>
<div class="abs" style="left:23px;top:40px"><svg width="10" height="14" viewBox="0 0 10 14" ><path d="M8 1.200L2.200 7L8 12.800" fill="none" stroke="#414b55" stroke-width="2"/></svg></div>
<div class="btn" style="left:50px;top:33px;width:31.5px;height:28px;"></div>
<div class="abs" style="left:61px;top:40px"><svg width="10" height="14" viewBox="0 0 10 14" ><path d="M2 1.200L7.800 7L2 12.800" fill="none" stroke="#a0a6ad" stroke-width="2"/></svg></div>
<div class="btn" style="left:91px;top:33px;width:31.5px;height:28px;"></div>
<div class="abs" style="left:98.5px;top:38.5px"><svg width="16" height="16" viewBox="0 0 16 16" ><path d="M10.900 4.400A5 5 0 1 0 12.900 9.600" fill="none" stroke="#414b55" stroke-width="2"/><path d="M8.700 8H14.500V2.600z" fill="#414b55"/></svg></div>
<div class="inp" style="left:132px;top:33px;width:579.5px;height:28px;"></div>
<div class="t" style="top:40.85px;font-size:12px;color:#414b55;letter-spacing:-0.056px;left:141.25px;">Mes Sagas</div>
<div class="abs" style="left:213px;top:42px"><svg width="8" height="10" viewBox="0 0 8 10" ><path d="M2.300 1.700L5.700 5.100L2.300 8.500" fill="none" stroke="#414b55" stroke-width="1.800"/></svg></div>
<div class="t" style="top:40.85px;font-size:12px;color:#414b55;letter-spacing:-0.161px;left:228px;">Marvel</div>
<div class="abs" style="left:274.5px;top:42px"><svg width="8" height="10" viewBox="0 0 8 10" ><path d="M2.300 1.700L5.700 5.100L2.300 8.500" fill="none" stroke="#414b55" stroke-width="1.800"/></svg></div>
<div class="t" style="top:40.85px;font-size:12px;color:#414b55;letter-spacing:-0.094px;left:290.5px;">Ant Man</div>
<div class="abs" style="left:686.5999999999999px;top:40px"><svg width="15" height="14" viewBox="0 0 15 14" ><path d="M7.500 0L9.400 5.100L14.900 5.300L10.600 8.700L12.100 14L7.500 11L2.900 14L4.400 8.700L0.100 5.300L5.600 5.100z" fill="#c8cfd6"/></svg></div>
<div class="inp" style="left:720.5px;top:33px;width:80px;height:28px;"></div>
<div class="abs" style="left:728px;top:38px"><svg width="18" height="18" viewBox="0 0 18 18" ><circle cx="10.500" cy="7.500" r="5.500" fill="none" stroke="#414b55" stroke-width="2"/><path d="M6.600 11.400L2.700 15.300" stroke="#414b55" stroke-width="3.200" stroke-linecap="round"/></svg></div>
<div class="car" style="left:748.5px;top:45.80000000000001px;border-width:3.5px 3.500px 0 3.500px;border-top:3.500px solid #414b55"></div>
<div class="t" style="top:41.35px;font-size:12px;color:#979dab;left:759.8px;">Recherche</div>
<div class="btn" style="left:12px;top:69px;width:89.5px"></div><div class="t" style="top:78.25px;font-size:12px;color:#414b55;letter-spacing:0.071px;left:27px;">Charger</div><div class="car" style="left:81.0px;top:83.2px;border-top-color:#414b55"></div>
<div class="btn" style="left:108.75px;top:69px;width:74.25px"></div><div class="t" style="top:78.25px;font-size:12px;color:#414b55;letter-spacing:0.150px;left:124px;">Créer</div><div class="car" style="left:163.0px;top:83.2px;border-top-color:#414b55"></div>
<div class="btn" style="left:189.75px;top:69px;width:78.0px"></div><div class="t" style="top:78.25px;font-size:12px;color:#414b55;letter-spacing:-0.099px;left:205px;">Action</div><div class="car" style="left:247.5px;top:83.2px;border-top-color:#414b55"></div>
<div class="btn" style="left:276.25px;top:69px;width:76.0px"></div><div class="t" style="top:78.25px;font-size:12px;color:#414b55;letter-spacing:-0.031px;left:291.5px;">Outils</div><div class="car" style="left:331.5px;top:83.2px;border-top-color:#414b55"></div>
<div class="btn" style="left:359px;top:69px;width:97.25px"></div><div class="t" style="top:78.25px;font-size:12px;color:#414b55;letter-spacing:-0.042px;left:374px;">Paramètres</div>
<div class="abs" style="left:190px;top:105px;width:8px;height:303px;background:#cfcfcf"></div>
<div class="abs" style="left:204px;top:101px;width:1px;height:455px;background:#e6e9ed"></div>
<div class="abs" style="left:12px;top:329px;width:175px;height:28px;background:#0a82e1;border-radius:2px"></div>
<div class="abs" style="left:12px;top:105px;width:175px;height:451px;overflow:hidden">
<div class="car" style="left:3.6000000000000227px;top:11.699999999999989px;border-width:4.500px 4px 0 4px;border-top:4.500px solid #414b55"></div>
<div class="t" style="top:8.05px;font-size:12px;color:#414b55;font-weight:bold;letter-spacing:0.192px;left:18.600000000000023px;">Nas-DS420_Polo</div>
<div class="abs" style="left:22.300000000000022px;top:37.69999999999999px;width:0;height:0;border-top:4px solid transparent;border-bottom:4px solid transparent;border-left:4.500px solid #414b55"></div>
<div class="t" style="top:36.05px;font-size:12px;color:#414b55;letter-spacing:-0.158px;left:34.60000000000002px;">Documents</div>
<div class="abs" style="left:22.300000000000022px;top:65.69999999999999px;width:0;height:0;border-top:4px solid transparent;border-bottom:4px solid transparent;border-left:4.500px solid #414b55"></div>
<div class="t" style="top:64.05px;font-size:12px;color:#414b55;letter-spacing:-0.258px;left:34.60000000000002px;">home</div>
<div class="abs" style="left:22.300000000000022px;top:93.69999999999999px;width:0;height:0;border-top:4px solid transparent;border-bottom:4px solid transparent;border-left:4.500px solid #414b55"></div>
<div class="t" style="top:92.05px;font-size:12px;color:#414b55;letter-spacing:-0.056px;left:34.60000000000002px;">homes</div>
<div class="abs" style="left:22.300000000000022px;top:121.69999999999999px;width:0;height:0;border-top:4px solid transparent;border-bottom:4px solid transparent;border-left:4.500px solid #414b55"></div>
<div class="t" style="top:120.05px;font-size:12px;color:#414b55;letter-spacing:-0.071px;left:34.60000000000002px;">Mes films</div>
<div class="car" style="left:19.600000000000023px;top:151.7px;border-width:4.500px 4px 0 4px;border-top:4.500px solid #414b55"></div>
<div class="t" style="top:148.05px;font-size:12px;color:#414b55;letter-spacing:-0.056px;left:34.60000000000002px;">Mes Sagas</div>
<div class="abs" style="left:38.300000000000026px;top:177.7px;width:0;height:0;border-top:4px solid transparent;border-bottom:4px solid transparent;border-left:4.500px solid #414b55"></div>
<div class="t" style="top:176.05px;font-size:12px;color:#414b55;letter-spacing:-0.141px;left:50.60000000000002px;">#recycle</div>
<div class="car" style="left:35.60000000000002px;top:207.7px;border-width:4.500px 4px 0 4px;border-top:4.500px solid #414b55"></div>
<div class="t" style="top:204.05px;font-size:12px;color:#414b55;letter-spacing:-0.161px;left:50.60000000000002px;">Marvel</div>
<div class="t" style="top:232.05px;font-size:12px;color:#fff;letter-spacing:-0.094px;left:66.60000000000002px;">Ant Man</div>
<div class="abs" style="left:54.300000000000026px;top:261.7px;width:0;height:0;border-top:4px solid transparent;border-bottom:4px solid transparent;border-left:4.500px solid #414b55"></div>
<div class="t" style="top:260.05px;font-size:12px;color:#414b55;letter-spacing:-0.035px;left:66.60000000000002px;">Avengers</div>
<div class="abs" style="left:54.300000000000026px;top:289.7px;width:0;height:0;border-top:4px solid transparent;border-bottom:4px solid transparent;border-left:4.500px solid #414b55"></div>
<div class="t" style="top:288.05px;font-size:12px;color:#414b55;letter-spacing:0.032px;left:66.60000000000002px;">Black Panther</div>
<div class="abs" style="left:54.300000000000026px;top:317.70000000000005px;width:0;height:0;border-top:4px solid transparent;border-bottom:4px solid transparent;border-left:4.500px solid #414b55"></div>
<div class="t" style="top:316.05px;font-size:12px;color:#414b55;letter-spacing:-0.045px;left:66.60000000000002px;">Captain America</div>
<div class="abs" style="left:54.300000000000026px;top:345.70000000000005px;width:0;height:0;border-top:4px solid transparent;border-bottom:4px solid transparent;border-left:4.500px solid #414b55"></div>
<div class="t" style="top:344.05px;font-size:12px;color:#414b55;letter-spacing:-0.075px;left:66.60000000000002px;">Gardiens de la Galaxie</div>
<div class="abs" style="left:54.300000000000026px;top:373.70000000000005px;width:0;height:0;border-top:4px solid transparent;border-bottom:4px solid transparent;border-left:4.500px solid #414b55"></div>
<div class="t" style="top:372.05px;font-size:12px;color:#414b55;letter-spacing:0.213px;left:66.60000000000002px;">Iron Man</div>
<div class="abs" style="left:54.300000000000026px;top:401.70000000000005px;width:0;height:0;border-top:4px solid transparent;border-bottom:4px solid transparent;border-left:4.500px solid #414b55"></div>
<div class="t" style="top:400.05px;font-size:12px;color:#414b55;letter-spacing:-0.161px;left:66.60000000000002px;">Marvel</div>
<div class="abs" style="left:54.300000000000026px;top:429.70000000000005px;width:0;height:0;border-top:4px solid transparent;border-bottom:4px solid transparent;border-left:4.500px solid #414b55"></div>
<div class="t" style="top:428.05px;font-size:12px;color:#414b55;letter-spacing:-0.035px;left:66.60000000000002px;">Marvel's Agents of SHIELD</div>
</div>
<div class="hl" style="left:221px;top:105px;width:600px"></div>
<div class="hl" style="left:221px;top:132px;width:600px"></div>
<div class="hl" style="left:221px;top:159.5px;width:600px"></div>
<div class="hl" style="left:221px;top:186.3px;width:600px"></div>
<div class="hl" style="left:221px;top:517px;width:600px"></div>
<div class="hl" style="left:221px;top:544px;width:600px"></div>
<div class="abs" style="left:509.5px;top:106px;width:1px;height:26px;background:#e6e9ed"></div>
<div class="abs" style="left:603.4000000000001px;top:106px;width:1px;height:26px;background:#e6e9ed"></div>
<div class="abs" style="left:721.3px;top:106px;width:1px;height:26px;background:#e6e9ed"></div>
<div class="t" style="top:112.75px;font-size:12px;color:#2a7ad2;letter-spacing:-0.339px;left:230.70000000000005px;">Nom</div>
<div class="t" style="top:112.75px;font-size:12px;color:#2a7ad2;letter-spacing:-0.049px;left:565.5px;">Taille</div>
<div class="t" style="top:112.75px;font-size:12px;color:#2a7ad2;letter-spacing:-0.001px;left:612.4000000000001px;">Type de fichier</div>
<div class="t" style="top:112.75px;font-size:12px;color:#2a7ad2;left:760.7px;">Date de modification</div>
<div class="abs" style="left:230px;top:138px"><svg width="16" height="16" viewBox="0 0 16 16" ><rect width="16" height="16" rx="0.600" fill="#8e6ccc"/><circle cx="8" cy="8" r="4.700" fill="none" stroke="#fff" stroke-width="1.200"/><path d="M6.600 5.600L10.400 8L6.600 10.400z" fill="#fff"/></svg></div>
<div class="t" style="top:140.35px;font-size:12px;color:#414b55;letter-spacing:0.026px;left:250.79999999999995px;">Ant Man 1.mkv</div>
<div class="t" style="top:140.85px;font-size:12px;color:#414b55;letter-spacing:0.089px;left:546.5px;">4.55 GB</div>
<div class="t" style="top:140.85px;font-size:12px;color:#414b55;letter-spacing:0.048px;left:612.4000000000001px;">MKV Fichier</div>
<div class="t" style="top:140.85px;font-size:12px;color:#414b55;left:752.8px;">04/04/2020</div>
<div class="abs" style="left:230px;top:165px"><svg width="16" height="16" viewBox="0 0 16 16" ><rect width="16" height="16" rx="0.600" fill="#8e6ccc"/><circle cx="8" cy="8" r="4.700" fill="none" stroke="#fff" stroke-width="1.200"/><path d="M6.600 5.600L10.400 8L6.600 10.400z" fill="#fff"/></svg></div>
<div class="t" style="top:166.65px;font-size:12px;color:#414b55;letter-spacing:0.064px;left:250.79999999999995px;">Ant-Man 2.mkv</div>
<div class="t" style="top:167.15px;font-size:12px;color:#414b55;letter-spacing:0.079px;left:537.8px;">684.5 MB</div>
<div class="t" style="top:167.15px;font-size:12px;color:#414b55;letter-spacing:0.048px;left:612.4000000000001px;">MKV Fichier</div>
<div class="t" style="top:167.15px;font-size:12px;color:#414b55;left:753.7px;">17/04/2020</div>
</div>
</body>
</html>
